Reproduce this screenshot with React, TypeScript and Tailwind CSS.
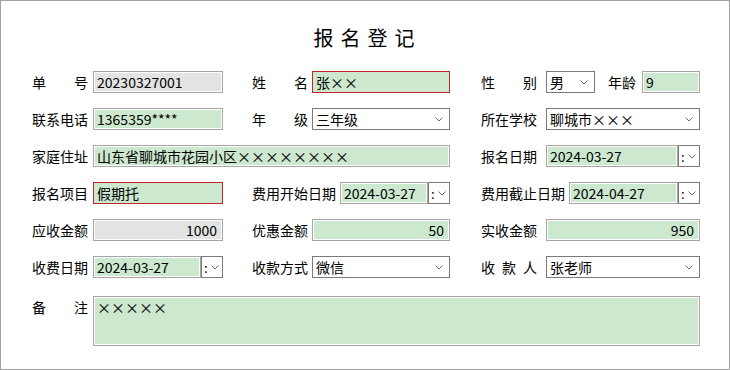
import React from "react";

const FONT = { fontFamily: '"Noto Sans CJK SC", "Liberation Sans", sans-serif' };

// render × signs at full width like the original form font
function Txt({ text }: { text: string }) {
  return (
    <>
      {text.split("").map((c, i) =>
        c === "×" ? (
          <span key={i} className="inline-block w-[14px] text-center">
            ×
          </span>
        ) : (
          <span key={i}>{c}</span>
        )
      )}
    </>
  );
}

function Label({ text, w = "w-[56px]", mr = "mr-[5px]" }: { text: string; w?: string; mr?: string }) {
  return (
    <div className={`flex justify-between shrink-0 text-[14px] leading-[22px] text-black ${w} ${mr}`}>
      {text.split("").map((c, i) => (
        <span key={i}>{c}</span>
      ))}
    </div>
  );
}

function Chevron() {
  return (
    <svg width="8" height="5" viewBox="0 0 8 5" className="shrink-0">
      <polyline points="0.5,0.5 4,4 7.5,0.5" fill="none" stroke="#6b6b6b" strokeWidth="1" />
    </svg>
  );
}

function Input({
  value,
  w,
  tone = "green",
  right = false,
  red = false,
}: {
  value: string;
  w: string;
  tone?: "green" | "gray";
  right?: boolean;
  red?: boolean;
}) {
  const bg = tone === "green" ? "bg-[#cce8cf]" : "bg-[#e3e3e3]";
  const border = red ? "border-[#c0262b]" : "border-[#a5a5a5] shadow-[inset_0_0_0_1px_#ffffff]";
  return (
    <div
      className={`h-[22px] shrink-0 border ${border} ${bg} ${w} flex items-center px-[3px] text-[14px] text-black whitespace-nowrap overflow-hidden ${
        right ? "justify-end pr-[5px]" : ""
      }`}
    >
      <Txt text={value} />
    </div>
  );
}

function Select({ value, w }: { value: string; w: string }) {
  return (
    <div
      className={`h-[22px] shrink-0 border border-[#7a7a7a] bg-white ${w} flex items-center justify-between pl-[3px] pr-[6px] text-[14px] text-black`}
    >
      <span className="whitespace-nowrap">
        <Txt text={value} />
      </span>
      <Chevron />
    </div>
  );
}

function DateBox({ value, w }: { value: string; w: string }) {
  return (
    <div className="flex shrink-0">
      <div
        className={`h-[22px] border border-[#a5a5a5] shadow-[inset_0_0_0_1px_#ffffff] bg-[#cce8cf] ${w} flex items-center px-[3px] text-[14px] text-black`}
      >
        {value}
      </div>
      <div className="h-[22px] w-[22px] border border-[#7a7a7a] bg-white flex items-center pl-[2px] gap-[3px]">
        <span className="text-[13px] leading-none text-black">:</span>
        <Chevron />
      </div>
    </div>
  );
}

function Row({ children }: { children: React.ReactNode }) {
  return <div className="flex items-center h-[22px]">{children}</div>;
}

export default function App() {
  return (
    <div
      className="w-[730px] h-[370px] box-border border border-[#a0a0a0] bg-white overflow-hidden"
      style={FONT}
    >
      <div className="mt-[25px] text-center text-[20px] leading-[24px] tracking-[7px] pl-[5px] text-black">
        报名登记
      </div>

      <div className="mt-[21px] pl-[31px] flex flex-col gap-[15px]">
        <Row>
          <div className="flex w-[191px]">
            <Label text="单　　号" />
            <Input value="20230327001" w="w-[130px]" tone="gray" />
          </div>
          <div className="flex w-[198px] ml-[29px]">
            <Label text="姓　　名" mr="mr-[4px]" />
            <Input value="张××" w="w-[138px]" red />
          </div>
          <div className="flex items-center w-[219px] ml-[31px]">
            <Label text="性　　别" mr="mr-[9px]" />
            <Select value="男" w="w-[49px]" />
            <span className="ml-[13px] mr-[6px] text-[14px] leading-[22px]">年龄</span>
            <Input value="9" w="w-[58px]" />
          </div>
        </Row>

        <Row>
          <div className="flex w-[191px]">
            <Label text="联系电话" />
            <Input value="1365359****" w="w-[130px]" />
          </div>
          <div className="flex w-[198px] ml-[29px]">
            <Label text="年　　级" mr="mr-[4px]" />
            <Select value="三年级" w="w-[138px]" />
          </div>
          <div className="flex w-[219px] ml-[31px]">
            <Label text="所在学校" mr="mr-[9px]" />
            <Select value="聊城市×××" w="w-[154px]" />
          </div>
        </Row>

        <Row>
          <div className="flex w-[418px]">
            <Label text="家庭住址" />
            <Input value="山东省聊城市花园小区××××××××" w="w-[357px]" />
          </div>
          <div className="flex w-[219px] ml-[31px]">
            <Label text="报名日期" mr="mr-[9px]" />
            <DateBox value="2024-03-27" w="w-[132px]" />
          </div>
        </Row>

        <Row>
          <div className="flex w-[191px]">
            <Label text="报名项目" />
            <Input value="假期托" w="w-[130px]" red />
          </div>
          <div className="flex w-[198px] ml-[29px]">
            <Label text="费用开始日期" w="w-[84px]" mr="mr-[4px]" />
            <DateBox value="2024-03-27" w="w-[88px]" />
          </div>
          <div className="flex w-[219px] ml-[31px]">
            <Label text="费用截止日期" w="w-[84px]" mr="mr-[4px]" />
            <DateBox value="2024-04-27" w="w-[109px]" />
          </div>
        </Row>

        <Row>
          <div className="flex w-[191px]">
            <Label text="应收金额" />
            <Input value="1000" w="w-[130px]" tone="gray" right />
          </div>
          <div className="flex w-[198px] ml-[29px]">
            <Label text="优惠金额" mr="mr-[4px]" />
            <Input value="50" w="w-[138px]" right />
          </div>
          <div className="flex w-[219px] ml-[31px]">
            <Label text="实收金额" mr="mr-[9px]" />
            <Input value="950" w="w-[154px]" right />
          </div>
        </Row>

        <Row>
          <div className="flex w-[191px]">
            <Label text="收费日期" />
            <DateBox value="2024-03-27" w="w-[108px]" />
          </div>
          <div className="flex w-[198px] ml-[29px]">
            <Label text="收款方式" mr="mr-[4px]" />
            <Select value="微信" w="w-[138px]" />
          </div>
          <div className="flex w-[219px] ml-[31px]">
            <Label text="收 款 人" mr="mr-[9px]" />
            <Select value="张老师" w="w-[154px]" />
          </div>
        </Row>

        <div className="flex items-start mt-[3px]">
          <Label text="备　　注" />
          <div className="w-[607px] h-[50px] border border-[#a5a5a5] shadow-[inset_0_0_0_1px_#ffffff] bg-[#cce8cf] px-[3px] text-[14px] leading-[20px] text-black">
            <Txt text="×××××" />
          </div>
        </div>
      </div>
    </div>
  );
}
